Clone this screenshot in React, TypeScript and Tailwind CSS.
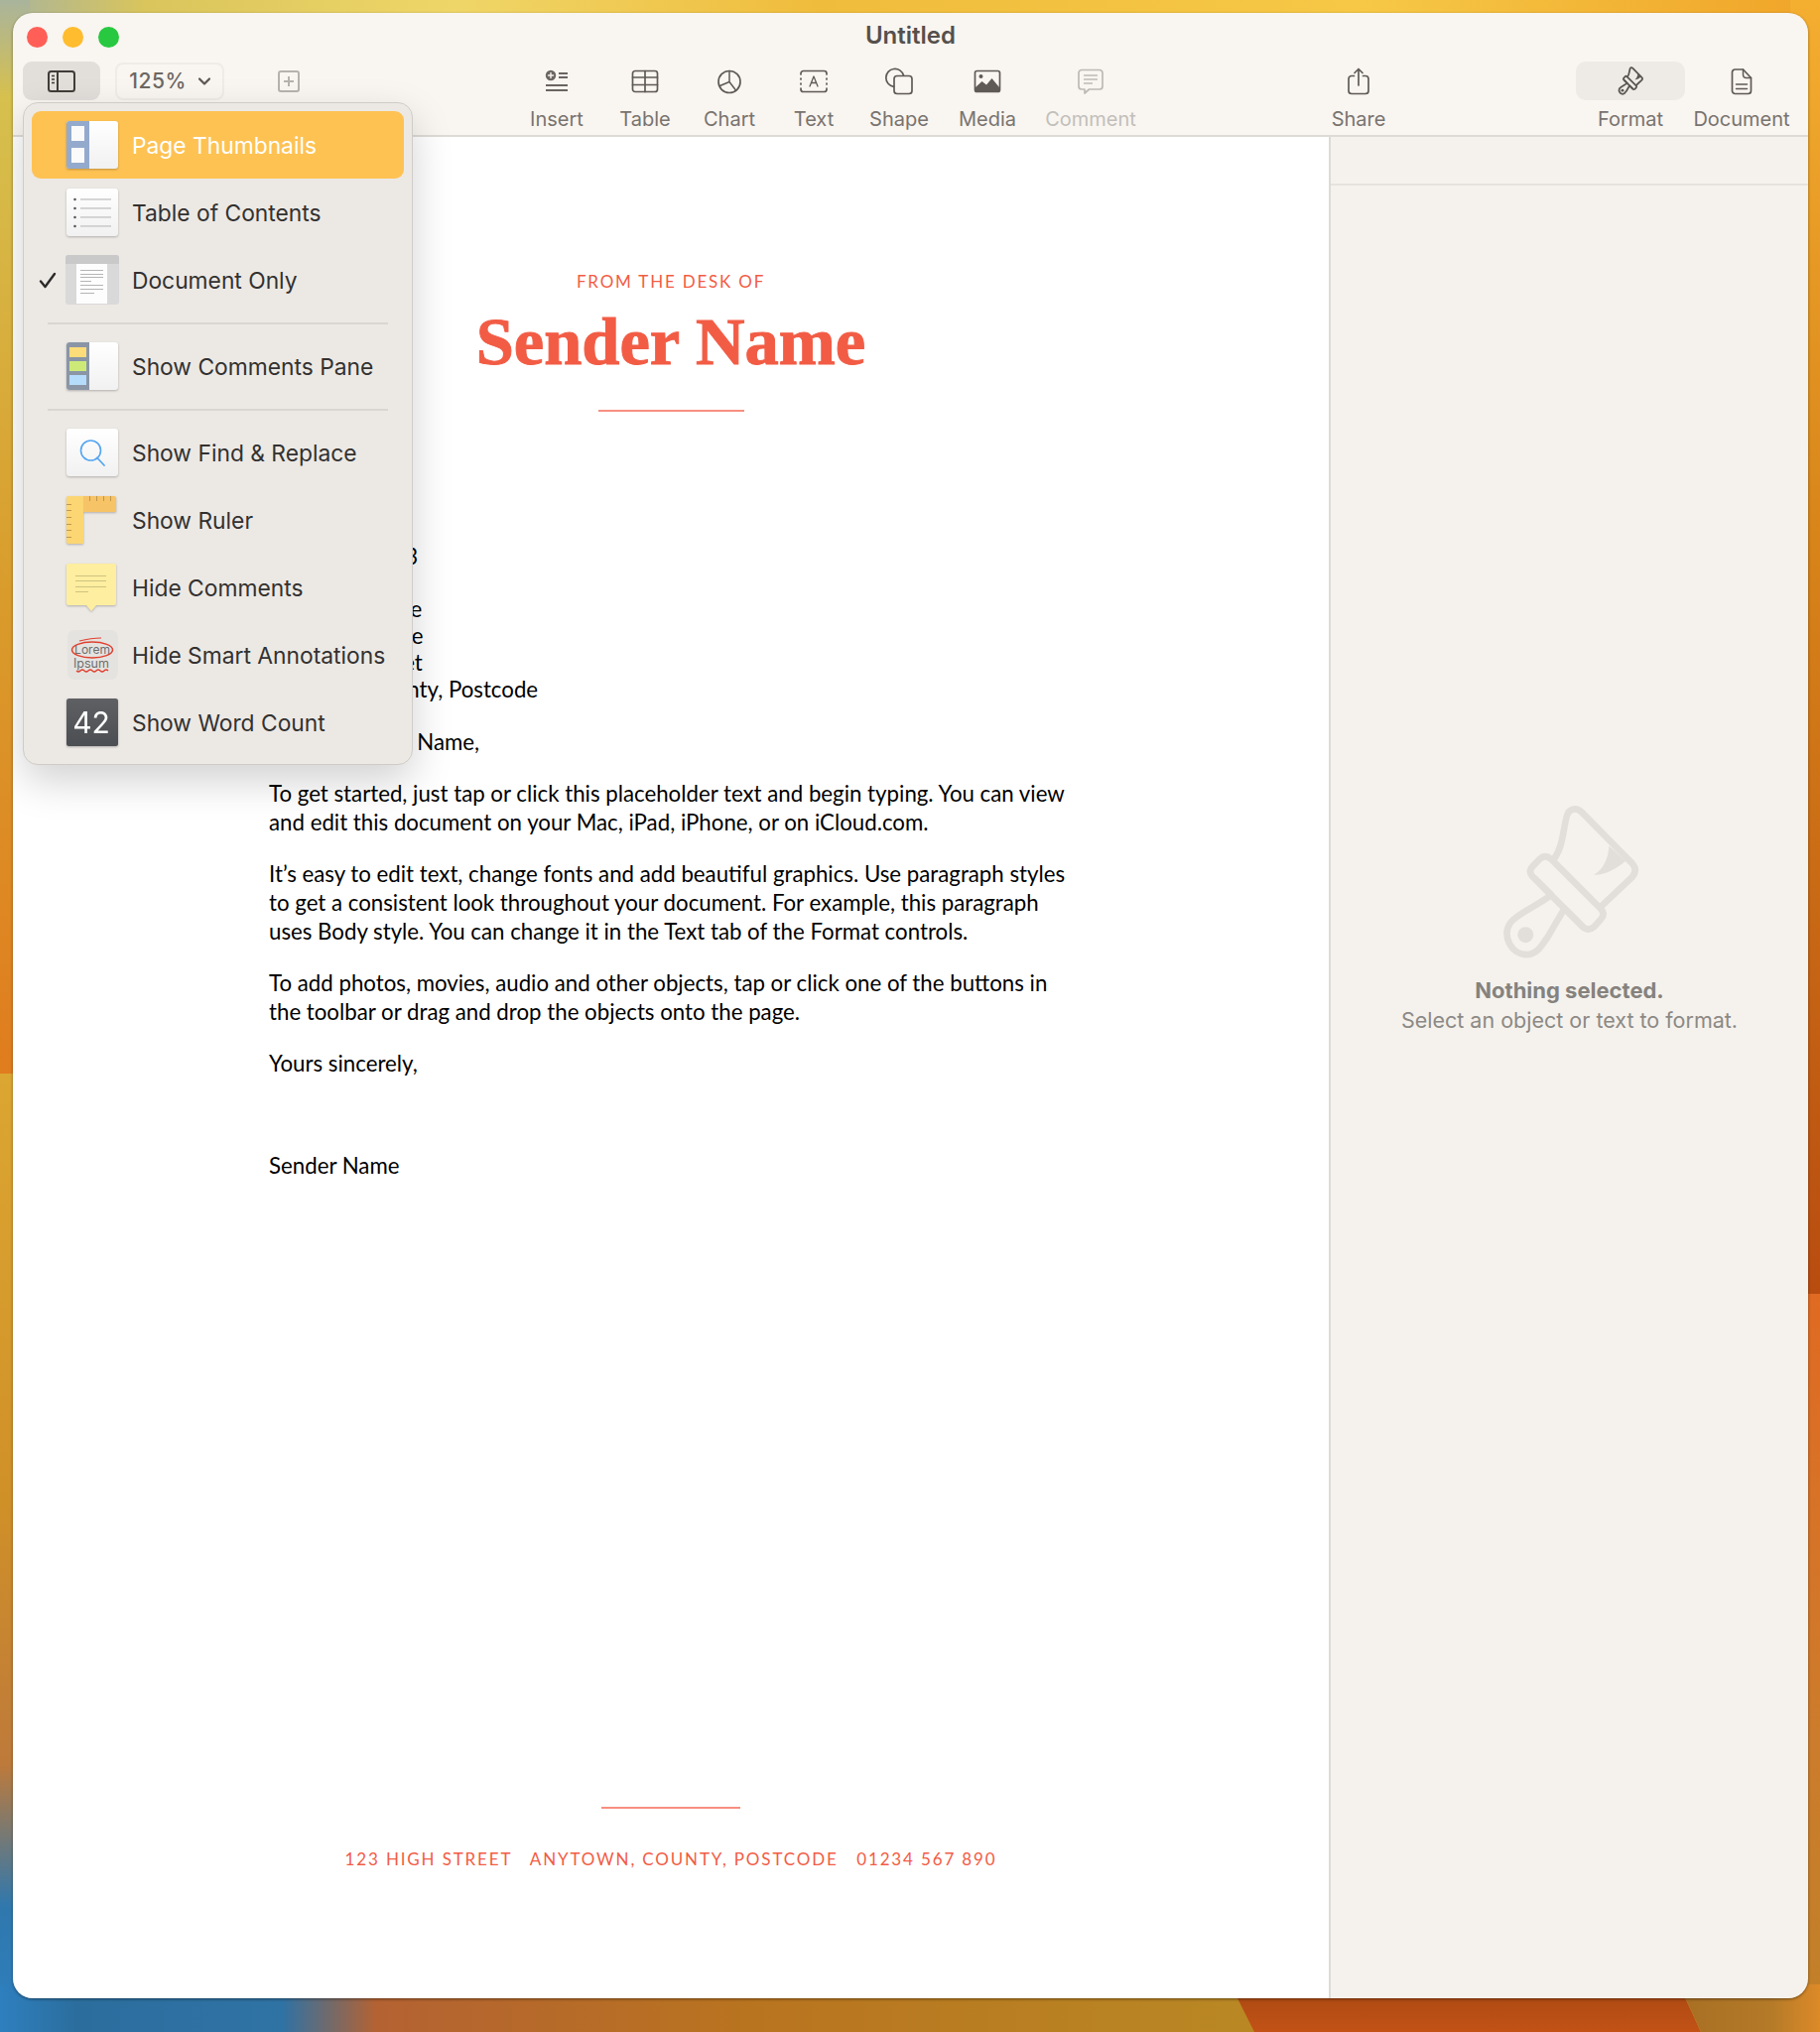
import type { ReactNode } from "react";

const ui = "font-['Inter','Liberation_Sans',sans-serif]";
const doc = "font-['Lato','Noto_Sans',sans-serif]";

function Wallpaper() {
  return (
    <svg className="absolute inset-0" width="1834" height="2048" viewBox="0 0 1834 2048">
      <defs>
        <linearGradient id="top" x1="0" x2="1" y1="0" y2="0">
          <stop offset="0" stopColor="#a9b49c" />
          <stop offset="0.08" stopColor="#d9c55c" />
          <stop offset="0.25" stopColor="#efd668" />
          <stop offset="0.45" stopColor="#f0bc3c" />
          <stop offset="0.75" stopColor="#f6c846" />
          <stop offset="1" stopColor="#f0a428" />
        </linearGradient>
        <linearGradient id="leftA" x1="0" x2="0" y1="0" y2="1">
          <stop offset="0" stopColor="#a9b49c" />
          <stop offset="0.09" stopColor="#d6c04e" />
          <stop offset="0.55" stopColor="#d99c2c" />
          <stop offset="1" stopColor="#e07c1e" />
        </linearGradient>
        <linearGradient id="leftB" x1="0" x2="0" y1="0" y2="1">
          <stop offset="0" stopColor="#dca632" />
          <stop offset="0.45" stopColor="#d09028" />
          <stop offset="0.72" stopColor="#be7a3a" />
          <stop offset="0.87" stopColor="#2f78ae" />
          <stop offset="1" stopColor="#2e7fbe" />
        </linearGradient>
        <linearGradient id="rightA" x1="0" x2="0" y1="0" y2="1">
          <stop offset="0" stopColor="#f4ae30" />
          <stop offset="0.4" stopColor="#d8861a" />
          <stop offset="1" stopColor="#b84c10" />
        </linearGradient>
        <linearGradient id="rightB" x1="0" x2="0" y1="0" y2="1">
          <stop offset="0" stopColor="#e06a22" />
          <stop offset="0.6" stopColor="#cc7c2c" />
          <stop offset="1" stopColor="#c08028" />
        </linearGradient>
        <linearGradient id="bottom" x1="0" x2="1" y1="0" y2="0">
          <stop offset="0" stopColor="#2e7fbe" />
          <stop offset="0.06" stopColor="#2b6e9e" />
          <stop offset="0.225" stopColor="#2f72a4" />
          <stop offset="0.3" stopColor="#b46232" />
          <stop offset="0.6" stopColor="#b9741f" />
          <stop offset="1" stopColor="#b98824" />
        </linearGradient>
        <linearGradient id="band" x1="0" x2="0" y1="0" y2="1">
          <stop offset="0" stopColor="#a84812" />
          <stop offset="1" stopColor="#c25216" />
        </linearGradient>
        <linearGradient id="corner" x1="0" x2="1" y1="0" y2="0">
          <stop offset="0" stopColor="#a86f24" />
          <stop offset="0.65" stopColor="#b47a28" />
          <stop offset="1" stopColor="#dd8a28" />
        </linearGradient>
      </defs>
      <rect width="1834" height="30" fill="url(#top)" />
      <rect width="30" height="1086" fill="url(#leftA)" />
      <rect y="1082" width="30" height="966" fill="url(#leftB)" />
      <rect x="1804" width="30" height="1306" fill="url(#rightA)" />
      <rect x="1804" y="1304" width="30" height="744" fill="url(#rightB)" />
      <rect y="2000" width="1264" height="48" fill="url(#bottom)" />
      <polygon points="1240,2000 1692,2000 1714,2048 1264,2048" fill="url(#band)" />
      <polygon points="1692,2000 1834,2000 1834,2048 1714,2048" fill="url(#corner)" />
    </svg>
  );
}

function Brush({ width, height, color, stroke }: { width: number; height: number; color: string; stroke: number }) {
  return (
    <svg width={width} height={height} viewBox="385 85 430 480" fill="none" stroke={color} strokeWidth={stroke} strokeLinejoin="round" strokeLinecap="round">
      <path d="M553 255 C580 220 580 170 592 125 C598 102 620 98 636 112 L790 268 C802 282 802 296 790 310 L695 400" />
      <path d="M510 255 Q527 240 544 255 L695 406 Q710 421 695 438 L675 460 Q657 476 640 460 L488 308 Q474 292 488 278 Z" />
      <path d="M497 316 L545 364 C500 400 440 420 420 450 C395 490 425 545 470 545 C500 545 515 520 535 490 L585 405 L640 460" />
      <circle cx="467" cy="485" r="24" fill={color} stroke="none" />
      <path d="M720 215 L770 262 C740 285 710 305 674 303 C705 285 718 250 720 215 Z" fill={color} stroke="none" />
    </svg>
  );
}

const toolStroke = "#5f5a56";

function Svg({ children, stroke = toolStroke }: { children: ReactNode; stroke?: string }) {
  return (
    <svg width="32" height="32" viewBox="0 0 32 32" fill="none" stroke={stroke} strokeWidth="1.7" strokeLinecap="round" strokeLinejoin="round">
      {children}
    </svg>
  );
}

const InsertIcon = () => (
  <Svg stroke="#6a6561">
    <circle cx="10" cy="10" r="5.2" fill="#6a6561" stroke="none" />
    <path d="M10 7.5v5M7.5 10h5" stroke="#f9f5f0" strokeWidth="1.4" />
    <path d="M18 8h9M18 12h9M5 20h22M5 25h22" strokeLinecap="butt" strokeWidth="1.8" />
  </Svg>
);
const TableIcon = () => (
  <Svg>
    <rect x="3.5" y="5.5" width="25" height="21" rx="2.5" />
    <path d="M3.5 12h25M3.5 19.5h25M16 5.5v21" />
  </Svg>
);
const ChartIcon = () => (
  <Svg>
    <circle cx="16" cy="16.5" r="11" />
    <path d="M16 5.5v11l6.5 8.5M16 16.5l-9.5 4" strokeWidth="1.5" />
  </Svg>
);
const TextIcon = () => (
  <Svg>
    <path d="M3 9V8a2.5 2.5 0 0 1 2.5-2.5h21A2.5 2.5 0 0 1 29 8v1M3 23v1a2.5 2.5 0 0 0 2.5 2.5h21A2.5 2.5 0 0 0 29 24v-1M3 13v1M3 18v1M29 13v1M29 18v1" />
    <path d="M12 21l4-10 4 10M13.5 17.5h5" strokeWidth="1.3" />
  </Svg>
);
const ShapeIcon = () => (
  <Svg>
    <path d="M10.5 21.3A9 9 0 1 1 20.5 10" />
    <rect x="11" y="10.5" width="18" height="18" rx="3" />
  </Svg>
);
const MediaIcon = () => (
  <Svg>
    <rect x="3.5" y="5.5" width="25" height="21" rx="2" />
    <path d="M4 26v-4l6.5-6 4.5 3.5 5.5-6.5 7.5 9v4z" fill="#5f5a56" stroke="none" />
    <circle cx="9.5" cy="11" r="2" fill="#5f5a56" stroke="none" />
  </Svg>
);
const CommentIcon = () => (
  <Svg stroke="#bdb9b5">
    <path d="M7 4.5h18a3 3 0 0 1 3 3v13.5a3 3 0 0 1-3 3H14.5L10 28v-4H7a3 3 0 0 1-3-3V7.5a3 3 0 0 1 3-3z" />
    <path d="M9.5 10h13M9.5 14h13M9.5 18h8" strokeWidth="1.3" />
  </Svg>
);
const ShareIcon = () => (
  <Svg>
    <path d="M11.5 10.5H9a3 3 0 0 0-3 3v12a3 3 0 0 0 3 3h14a3 3 0 0 0 3-3v-12a3 3 0 0 0-3-3h-2.5" />
    <path d="M16 20V3.5M12 7.5l4-4 4 4" />
  </Svg>
);
const DocumentIcon = () => (
  <Svg>
    <path d="M9.5 4h8l8 8.5v13a3 3 0 0 1-3 3h-13a3 3 0 0 1-3-3V7a3 3 0 0 1 3-3z" />
    <path d="M17.5 4v5.5a3 3 0 0 0 3 3h5M10.5 19h11M10.5 23.5h11" strokeWidth="1.5" />
  </Svg>
);

function ToolItem({ label, icon, className, dim }: { label: string; icon: ReactNode; className: string; dim?: boolean }) {
  return (
    <div className={`flex flex-col items-center ${className}`}>
      <div className="flex h-[39px] items-center justify-center">{icon}</div>
      <span className={`mt-[5px] text-[20px] leading-[28px] ${dim ? "text-[#c2bfbb]" : "text-[#78736f]"}`}>{label}</span>
    </div>
  );
}

function Toolbar() {
  return (
    <div className={`flex h-[125px] shrink-0 flex-col border-b-2 border-[#dedbd7] bg-[#f9f5f0] ${ui}`}>
      <div className="relative flex h-[49px] items-center pl-[14px]">
        <div className="flex gap-[15px]">
          <div className="h-[21px] w-[21px] rounded-full bg-[#ff5f57]" />
          <div className="h-[21px] w-[21px] rounded-full bg-[#febc2e]" />
          <div className="h-[21px] w-[21px] rounded-full bg-[#28c840]" />
        </div>
        <div className="absolute inset-x-0 top-[9px] text-center text-[24px] leading-[28px] font-semibold text-[#55504c]">Untitled</div>
      </div>
      <div className="flex pl-[10px]">
        <div className="flex h-[39px] items-center">
          <div className="flex h-[39px] w-[78px] items-center justify-center rounded-[9px] bg-[#e2dfdb]">
            <svg width="28" height="22" viewBox="0 0 28 22" fill="none" stroke="#3f3c39" strokeWidth="2">
              <rect x="1" y="1" width="26" height="20" rx="2.5" />
              <path d="M10 1v20" />
              <path d="M4 5.5h3M4 9h3M4 12.5h3" strokeWidth="1.5" />
            </svg>
          </div>
          <div className="ml-[15px] flex h-[38px] w-[110px] items-center justify-center gap-[12px] rounded-[8px] border-2 border-[#efebe6] text-[21px] font-medium tracking-[0.5px] text-[#6c6763]">
            125%
            <svg width="12" height="8" viewBox="0 0 12 8" fill="none" stroke="#5c5753" strokeWidth="2.2" strokeLinecap="round" strokeLinejoin="round">
              <path d="M1 1.5 6 6.5l5-5" />
            </svg>
          </div>
          <svg className="ml-[54px]" width="22" height="22" viewBox="0 0 22 22" fill="none" stroke="#b6b2ae" strokeWidth="2">
            <rect x="1" y="1" width="20" height="20" rx="2" />
            <path d="M11 6v10M6 11h10" />
          </svg>
        </div>
        <div className="ml-[214px] flex">
          <ToolItem className="w-[90px]" label="Insert" icon={<InsertIcon />} />
          <ToolItem className="w-[88px]" label="Table" icon={<TableIcon />} />
          <ToolItem className="w-[82px]" label="Chart" icon={<ChartIcon />} />
          <ToolItem className="w-[88px]" label="Text" icon={<TextIcon />} />
          <ToolItem className="w-[84px]" label="Shape" icon={<ShapeIcon />} />
          <ToolItem className="w-[94px]" label="Media" icon={<MediaIcon />} />
          <ToolItem className="w-[114px]" label="Comment" icon={<CommentIcon />} dim />
        </div>
        <ToolItem className="ml-[173px] w-[80px]" label="Share" icon={<ShareIcon />} />
        <div className="ml-[179px] flex">
          <div className="flex w-[110px] flex-col items-center">
            <div className="flex h-[39px] w-full items-center justify-center rounded-[10px] bg-[#eeeae5]">
              <Brush width={26} height={29} color="#5a5652" stroke={30} />
            </div>
            <span className="mt-[5px] text-[20px] leading-[28px] text-[#78736f]">Format</span>
          </div>
          <ToolItem className="w-[114px]" label="Document" icon={<DocumentIcon />} />
        </div>
      </div>
    </div>
  );
}

function Tile({ children, shadow = true }: { children: ReactNode; shadow?: boolean }) {
  return (
    <svg width="54" height="50" viewBox="0 0 54 50" className={shadow ? "drop-shadow-[0_1px_1px_rgba(0,0,0,0.25)]" : ""}>
      <defs>
        <linearGradient id="paper" x1="0" x2="0" y1="0" y2="1">
          <stop offset="0" stopColor="#ffffff" />
          <stop offset="1" stopColor="#f1f1f1" />
        </linearGradient>
      </defs>
      {children}
    </svg>
  );
}

const ThumbIcon = () => (
  <Tile>
    <rect x="1" y="1" width="52" height="48" rx="3" fill="url(#paper)" />
    <path d="M4 1h20v48H4a3 3 0 0 1-3-3V4a3 3 0 0 1 3-3z" fill="#93aacd" />
    <rect x="6" y="6" width="13" height="15" fill="#fafafa" />
    <rect x="6" y="28" width="13" height="15" fill="#fafafa" />
  </Tile>
);
const TocIcon = () => (
  <Tile>
    <rect x="1" y="1" width="52" height="48" rx="3" fill="url(#paper)" />
    {[12, 21, 30, 39].map((y) => (
      <g key={y}>
        <circle cx="9.5" cy={y} r="1.3" fill="#55585c" />
        <rect x="15" y={y - 0.8} width="31" height="1.5" fill="#c9c9c9" />
      </g>
    ))}
  </Tile>
);
const DocOnlyIcon = () => (
  <Tile shadow={false}>
    <rect x="0" y="0" width="54" height="50" rx="3" fill="#d9d9da" />
    <path d="M3 0h48a3 3 0 0 1 3 3v6H0V3a3 3 0 0 1 3-3z" fill="#c9c9ca" />
    <rect x="11" y="9" width="31" height="40" fill="#fdfdfd" />
    {[15, 19, 22, 26, 30, 34, 38].map((y, i) => (
      <rect key={y} x="15" y={y} width={i === 3 ? 11 : i === 6 ? 14 : 23} height="1" fill="#b5b5b5" />
    ))}
  </Tile>
);
const CommentsPaneIcon = () => (
  <Tile>
    <rect x="1" y="1" width="52" height="48" rx="3" fill="url(#paper)" />
    <path d="M4 1h20v48H4a3 3 0 0 1-3-3V4a3 3 0 0 1 3-3z" fill="#8a96a6" />
    <rect x="4" y="6" width="17" height="10" fill="#fddc7a" />
    <rect x="4" y="20" width="17" height="10" fill="#cdea78" />
    <rect x="4" y="34" width="17" height="10" fill="#b6dcfb" />
  </Tile>
);
const FindIcon = () => (
  <Tile>
    <rect x="1" y="1" width="52" height="48" rx="3" fill="url(#paper)" />
    <circle cx="25.5" cy="23" r="10" fill="none" stroke="#55a5f2" strokeWidth="1.6" />
    <path d="M32 30.5 39 38" stroke="#55a5f2" strokeWidth="1.8" strokeLinecap="round" />
  </Tile>
);
const RulerIcon = () => (
  <Tile>
    <path d="M18 1h31a2 2 0 0 1 2 2v13a1 1 0 0 1-1 1H18z" fill="#f6c366" />
    <path d="M3 1h15v48H3a2 2 0 0 1-2-2V3a2 2 0 0 1 2-2z" fill="#fbd673" />
    {[24, 31, 38, 45].map((x) => (
      <rect key={x} x={x} y="1" width="0.8" height="5" fill="#b28a45" />
    ))}
    {[9, 15, 22, 29, 35, 42].map((y) => (
      <rect key={y} x="1" y={y} width="5" height="0.8" fill="#b28a45" />
    ))}
  </Tile>
);
const NoteIcon = () => (
  <Tile>
    <path d="M3 1h46a2 2 0 0 1 2 2v38a2 2 0 0 1-2 2H31l-5 6-5-6H3a2 2 0 0 1-2-2V3a2 2 0 0 1 2-2z" fill="#fdeea0" />
    {[13, 18, 24].map((y) => (
      <rect key={y} x="10" y={y} width="31" height="1" fill="#d0c37f" />
    ))}
    <rect x="10" y="29" width="13" height="1" fill="#d0c37f" />
  </Tile>
);
const AnnotationIcon = () => (
  <Tile shadow={false}>
    <rect x="2" y="0" width="51" height="50" rx="7" fill="#e5e3e0" />
    <text x="27" y="24" textAnchor="middle" fontSize="12" fill="#6e6e6e" fontFamily="Inter, sans-serif">Lorem</text>
    <text x="26" y="38" textAnchor="middle" fontSize="12.5" fill="#6e6e6e" fontFamily="Inter, sans-serif">Ipsum</text>
    <ellipse cx="27" cy="20" rx="20.5" ry="8" fill="none" stroke="#e0402e" strokeWidth="1.5" />
    <path d="M14 11c8-2 14-3 22-3" fill="none" stroke="#e0402e" strokeWidth="1.2" />
    <path d="M11 41q2 2 4 0t4 0 4 0 4 0 4 0 4 0 4 0 4 0" fill="none" stroke="#e0402e" strokeWidth="1.3" />
  </Tile>
);
const WordCountIcon = () => (
  <Tile>
    <defs>
      <linearGradient id="slate" x1="0" x2="0" y1="0" y2="1">
        <stop offset="0" stopColor="#5f6063" />
        <stop offset="1" stopColor="#4b4e52" />
      </linearGradient>
    </defs>
    <rect x="1" y="1" width="52" height="48" rx="2.5" fill="url(#slate)" />
    <text x="26" y="36" textAnchor="middle" fontSize="30" fill="#ffffff" fontFamily="Inter, sans-serif">42</text>
  </Tile>
);

function MenuRow({ icon, label, active, checked }: { icon: ReactNode; label: string; active?: boolean; checked?: boolean }) {
  return (
    <div className={`relative flex h-[68px] items-center rounded-[9px] pl-[34px] ${active ? "bg-[#fec253] text-white" : "text-[#333130]"}`}>
      {checked && (
        <svg className="absolute left-[7px] top-[26px]" width="18" height="17" viewBox="0 0 18 17" fill="none" stroke="#2b2a29" strokeWidth="2.4" strokeLinecap="round" strokeLinejoin="round">
          <path d="M2 9.5 6.5 15 16 2" />
        </svg>
      )}
      <div className="flex w-[67px] shrink-0">{icon}</div>
      <span className="whitespace-nowrap pt-[3px]">{label}</span>
    </div>
  );
}

const MenuSep = () => <div className="mx-[16px] mb-[8px] mt-[9px] h-[2px] bg-[#d9d6d2]" />;

function ViewMenu() {
  return (
    <div className={`absolute left-[10px] top-[90px] h-[668px] w-[393px] rounded-[15px] border border-[#cfccc8] bg-[#ece9e5] px-[8px] pt-[8px] text-[22.8px] shadow-[0_16px_40px_rgba(0,0,0,0.18)] ${ui}`}>
      <MenuRow active icon={<ThumbIcon />} label="Page Thumbnails" />
      <MenuRow icon={<TocIcon />} label="Table of Contents" />
      <MenuRow checked icon={<DocOnlyIcon />} label="Document Only" />
      <MenuSep />
      <MenuRow icon={<CommentsPaneIcon />} label="Show Comments Pane" />
      <MenuSep />
      <MenuRow icon={<FindIcon />} label="Show Find & Replace" />
      <MenuRow icon={<RulerIcon />} label="Show Ruler" />
      <MenuRow icon={<NoteIcon />} label="Hide Comments" />
      <MenuRow icon={<AnnotationIcon />} label="Hide Smart Annotations" />
      <MenuRow icon={<WordCountIcon />} label="Show Word Count" />
    </div>
  );
}

function Letter() {
  return (
    <div className={`flex flex-1 flex-col items-stretch bg-white pl-[258px] pt-[134px] pb-[128px] text-[22.25px] leading-[29px] text-black ${doc}`}>
      <div className="ml-[-258px] flex flex-col items-center text-[#f25c45]">
        <div className="text-[17px] leading-[24px] tracking-[1.8px]">FROM THE DESK OF</div>
        <div className="mt-[8px] font-['Liberation_Serif',serif] text-[68.5px] leading-[80px] font-bold [-webkit-text-stroke:1px_#f25c45]">Sender Name</div>
        <div className="mt-[29px] h-[2px] w-[147px] bg-[#f78f80]" />
      </div>
      <p className="mt-[131px]">1 January 2023</p>
      <p className="mt-[25px] leading-[27px]">
        Recipient Name
        <br />
        Company Name
        <br />
        123 High Street
        <br />
        Anytown, County, Postcode
      </p>
      <p className="mt-[25px]">Dear Recipient Name,</p>
      <p className="mt-[23px]">
        To get started, just tap or click this placeholder text and begin typing. You can view
        <br />
        and edit this document on your Mac, iPad, iPhone, or on iCloud.com.
      </p>
      <p className="mt-[23px]">
        It’s easy to edit text, change fonts and add beautiful graphics. Use paragraph styles
        <br />
        to get a consistent look throughout your document. For example, this paragraph
        <br />
        uses Body style. You can change it in the Text tab of the Format controls.
      </p>
      <p className="mt-[23px]">
        To add photos, movies, audio and other objects, tap or click one of the buttons in
        <br />
        the toolbar or drag and drop the objects onto the page.
      </p>
      <p className="mt-[23px]">Yours sincerely,</p>
      <p className="mt-[74px]">Sender Name</p>
      <div className="ml-[-258px] mt-auto flex flex-col items-center text-[#f25c45]">
        <div className="h-[2px] w-[140px] bg-[#f78f80]" />
        <div className="mt-[39px] whitespace-pre text-[17px] leading-[24px] tracking-[1.85px]">123 HIGH STREET   ANYTOWN, COUNTY, POSTCODE   01234 567 890</div>
      </div>
    </div>
  );
}

function FormatPanel() {
  return (
    <div className={`flex w-[483px] shrink-0 flex-col border-l-2 border-[#dedbd7] bg-[#f5f2ed] ${ui}`}>
      <div className="h-[49px] border-b-2 border-[#e6e3de]" />
      <div className="flex flex-col items-center pt-[622px]">
        <Brush width={143} height={160} color="#e2dfda" stroke={20} />
        <div className="mt-[14px] text-[22px] leading-[30px] font-bold text-[#85827e]">Nothing selected.</div>
        <div className="text-[21.5px] leading-[30px] text-[#8c8985]">Select an object or text to format.</div>
      </div>
    </div>
  );
}

export default function App() {
  return (
    <div className="relative h-[2048px] w-[1834px] overflow-hidden bg-[#d99c2c]">
      <Wallpaper />
      <div className="absolute left-[13px] top-[13px] flex h-[2001px] w-[1809px] flex-col overflow-hidden rounded-[20px] shadow-[0_1px_3px_rgba(0,0,0,0.45)]">
        <Toolbar />
        <div className="flex flex-1">
          <Letter />
          <FormatPanel />
        </div>
        <ViewMenu />
      </div>
    </div>
  );
}
